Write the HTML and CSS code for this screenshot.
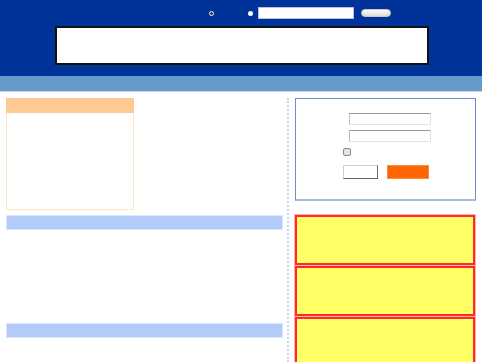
FILE: index.html
```html
<!DOCTYPE html>
<html lang="en">
<head>
  <meta charset="UTF-8">
  <title>Portal</title>
  <link rel="stylesheet" href="styles.css">
</head>
<body>
  <div class="header">
    <div class="search-row">
      <span class="radio radio-on"></span>
      <span class="radio radio-off"></span>
      <input type="text" class="search-input">
      <button class="search-button"></button>
    </div>
    <div class="banner"></div>
  </div>
  <div class="nav"></div>

  <div class="main">
    <div class="left-col">
      <div class="side-box">
        <div class="side-box-head"></div>
        <div class="side-box-body"></div>
      </div>
      <div class="section-bar"></div>
      <div class="section-space"></div>
      <div class="section-bar"></div>
    </div>

    <div class="divider"></div>

    <div class="right-col">
      <div class="login">
        <input type="text" class="login-input">
        <input type="password" class="login-input second">
        <div class="remember"><span class="check"></span></div>
        <div class="login-buttons">
          <button class="btn-plain"></button>
          <button class="btn-orange"></button>
        </div>
      </div>
      <div class="notice"></div>
      <div class="notice"></div>
      <div class="notice"></div>
    </div>
  </div>
</body>
</html>
```

FILE: styles.css
```css
/* page */
body {
  font-family: Arial, "Liberation Sans", sans-serif;
  background-color: #fff;
  margin: 0;
  padding: 0;
  overflow: hidden;
}

/* header */
.header {
  background-color: #003399;
  height: 76px;
}
.search-row {
  display: flex;
  align-items: center;
  height: 26px;
  padding-left: 209px;
}
.radio {
  display: block;
  width: 5px;
  height: 5px;
  border-radius: 50%;
  background-color: #fff;
  box-sizing: border-box;
}
.radio-on {
  border: 1px solid #f4f4f4;
  background-color: #333;
}
.radio-off {
  margin-left: 34px;
}
.search-input {
  margin: 0 0 0 5px;
  width: 96px;
  height: 12px;
  padding: 0;
  border: 1px solid #b8c0d8;
  box-sizing: border-box;
  background-color: #fff;
}
.search-button {
  margin: 0 0 0 7px;
  width: 30px;
  height: 8px;
  padding: 0;
  border: 1px solid #c8c8c8;
  border-radius: 4px;
  background: linear-gradient(#fafafa, #dcdcdc);
}
.banner {
  margin-left: 55px;
  width: 374px;
  height: 39px;
  box-sizing: border-box;
  border: 2px solid #111;
  background-color: #fff;
}
.nav {
  height: 15px;
  background-color: #6699cc;
  border-bottom: 1px solid #c6d8ec;
}

/* columns */
.main {
  display: flex;
  padding-top: 6px;
  height: 264px;
}
.left-col {
  width: 277px;
  margin-left: 6px;
}
.divider {
  margin: 0 6px 0 4px;
  width: 0;
  border-left: 2px dotted #c9d6ef;
}
.right-col {
  width: 181px;
}

/* left side */
.side-box {
  width: 128px;
}
.side-box-head {
  height: 15px;
  background-color: #ffc993;
}
.side-box-body {
  height: 97px;
  box-sizing: border-box;
  border: 1px solid #ffe3c6;
  border-top: none;
}
.section-bar {
  margin-top: 5px;
  height: 15px;
  box-sizing: border-box;
  background-color: #b3cbf8;
  border: 1px solid #dbe6fb;
}
.section-space {
  height: 88px;
}

/* login */
.login {
  height: 103px;
  box-sizing: border-box;
  border: 1px solid #6d8dcd;
  border-bottom: 2px solid #a9badf;
  padding-top: 14px;
}
.login-input {
  display: block;
  margin: 0 0 0 53px;
  width: 82px;
  height: 12px;
  padding: 0;
  box-sizing: border-box;
  border: 1px solid #e2e2e2;
  border-top-color: #9c9c9c;
  border-left-color: #bdbdbd;
  background-color: #fff;
}
.login-input.second {
  margin-top: 5px;
}
.remember {
  margin: 6px 0 0 47px;
  height: 8px;
}
.check {
  display: block;
  width: 8px;
  height: 8px;
  box-sizing: border-box;
  border: 1px solid #8a8a8a;
  border-radius: 2px;
  background-color: #e2e2e2;
}
.login-buttons {
  display: flex;
  margin: 9px 0 0 47px;
}
.btn-plain {
  width: 35px;
  height: 14px;
  padding: 0;
  box-sizing: border-box;
  border: 1px solid #cfcfcf;
  border-right-color: #666;
  border-bottom-color: #666;
  background-color: #fff;
}
.btn-orange {
  margin-left: 9px;
  width: 42px;
  height: 14px;
  padding: 0;
  box-sizing: border-box;
  border: 1px solid #f58a4a;
  background-color: #ff6600;
}

/* notices */
.notice {
  margin-top: 1px;
  width: 180px;
  height: 50px;
  box-sizing: border-box;
  border: 2px solid #ff2b2b;
  box-shadow: 0 0 0 1px #ffb0b0;
  background-color: #ffff66;
}
.login + .notice {
  margin-top: 14px;
}
```
